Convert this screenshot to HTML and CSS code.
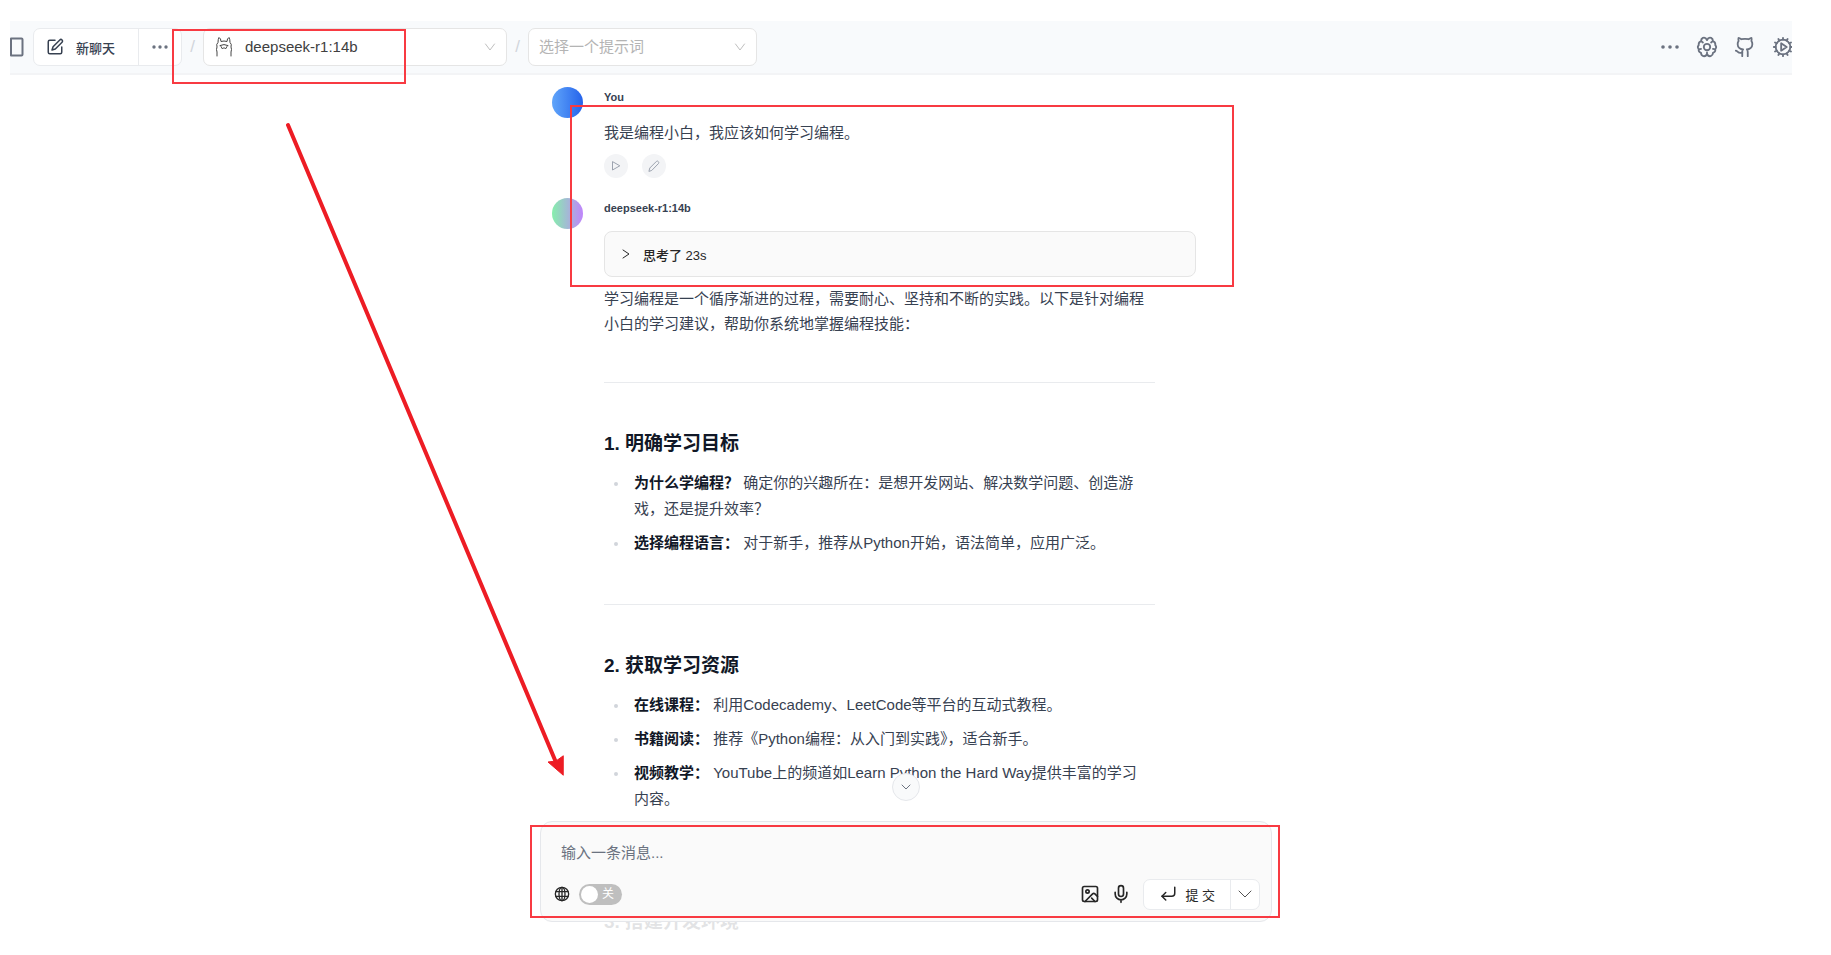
FILE: index.html
```html
<!DOCTYPE html>
<html lang="zh-CN">
<head>
    <meta charset="UTF-8">
    <meta name="viewport" content="width=device-width, initial-scale=1.0">
    <title>deepseek-r1:14b</title>
    <link rel="stylesheet" href="styles.css">
</head>
<body>
    <div class="app">
        <header class="header">
            <button type="button" class="icon-btn sidebar-btn" aria-label="侧边栏">
                <svg width="14" height="20" viewBox="0 0 14 20"><path d="M1 1.500h10.500q1 0 1 1v15q0 1-1 1H1z"/></svg>
            </button>
            <div class="btn-group">
                <button type="button" class="new-chat">
                    <svg width="18" height="18" viewBox="0 0 24 24"><path d="M12 3H5a2 2 0 0 0-2 2v14a2 2 0 0 0 2 2h14a2 2 0 0 0 2-2v-7"/><path d="M18.400 2.600a2.100 2.100 0 0 1 3 3L12.400 14.600 8 16l1.400-4.400z"/></svg>
                    <span>新聊天</span>
                </button>
                <button type="button" class="more-btn" aria-label="更多">
                    <svg class="dots" width="18" height="18" viewBox="0 0 18 18"><circle cx="3" cy="9" r="1.700"/><circle cx="9" cy="9" r="1.700"/><circle cx="15" cy="9" r="1.700"/></svg>
                </button>
            </div>
            <span class="slash">/</span>
            <div class="select-box model-select">
                <svg class="llama" width="18" height="22" viewBox="0 0 18 22"><path d="M2 20v-4q-1-2.500 0-5-1-3 1-4.500 0-3.500 1-5Q6 2.500 6 5.500q3-1 6 0 0-3 2-4 1 1.500 1 5 2 1.500 1 4.500 1 2.500 0 5v4"/><path d="M5 9.500q4-2 8 0M6 10.500l1.500 2.500L9 11.500l1.500 1.500 1.500-2.500"/></svg>
                <select aria-label="模型"><option>deepseek-r1:14b</option></select>
                <svg class="chevron" width="12" height="12" viewBox="0 0 12 12"><path d="M1.500 3 6 9l4.500-6"/></svg>
            </div>
            <span class="slash">/</span>
            <div class="select-box prompt-select">
                <select aria-label="提示词"><option>选择一个提示词</option></select>
                <svg class="chevron" width="12" height="12" viewBox="0 0 12 12"><path d="M1.500 3 6 9l4.500-6"/></svg>
            </div>
            <div class="header-right">
                <button type="button" class="icon-btn" aria-label="更多选项">
                    <svg class="dots" width="20" height="20" viewBox="0 0 20 20"><circle cx="3" cy="10" r="1.800"/><circle cx="10" cy="10" r="1.800"/><circle cx="17" cy="10" r="1.800"/></svg>
                </button>
                <button type="button" class="icon-btn" aria-label="模型设置">
                    <svg width="22" height="22" viewBox="0 0 24 24"><circle cx="12" cy="12" r="3.500"/><path d="M12 4.500Q10.500 1 7.500 2 5.500 3 5.500 5.500 2.500 6.500 3 10q-2 2 0 4.500-.5 3 2.500 4 0 2.500 2.500 3.500 3 .5 4-2.500 1 3 4 2.500 2.500-1 2.500-3.500 3-1 2.500-4 2-2.500 0-4.500.5-3.500-2.500-4.500 0-2.500-2-3.500-3-1-4.500 2.500zM5.500 5.500 7.500 7M18.500 5.500 16.500 7M3 14.500l2.500-.5M21 14.500l-2.500-.5M12 19.500V18"/></svg>
                </button>
                <a href="#" class="icon-btn" aria-label="GitHub">
                    <svg width="22" height="22" viewBox="0 0 24 24"><path d="M15 22v-4a4.800 4.800 0 0 0-1-3.500c3 0 6-2 6-5.500.08-1.250-.27-2.480-1-3.500.28-1.150.28-2.350 0-3.500 0 0-1 0-3 1.500-2.640-.5-5.360-.5-8 0C6 2 5 2 5 2c-.3 1.150-.3 2.350 0 3.500A5.400 5.400 0 0 0 4 9c0 3.500 3 5.500 6 5.500-.39.49-.68 1.050-.85 1.650S8.930 17.380 9 18v4"/><path d="M9 18c-4.510 2-5-2-7-2"/></svg>
                </a>
                <button type="button" class="icon-btn" aria-label="设置">
                    <svg width="22" height="22" viewBox="0 0 24 24"><circle cx="12" cy="12" r="8"/><path d="M12 2v2M12 20v2M2 12h2M17 20.700l-1-1.700M17 3.300 16 5M7 20.700 8 19M7 3.300 8 5M3.300 7 5 8M3.300 17 5 16M20.700 7 19 8M20.700 17 19 16M20 12h2M10 8v8l6-4z"/></svg>
                </button>
            </div>
        </header>

        <main class="chat">
            <div class="column">
                <section class="message">
                    <div class="avatar avatar-user"></div>
                    <div class="content">
                        <div class="name">You</div>
                        <p class="question">我是编程小白，我应该如何学习编程。</p>
                        <div class="actions">
                            <button type="button" aria-label="播放"><svg width="12" height="12" viewBox="0 0 12 12"><path d="M2.500 2v8l7-4z"/></svg></button>
                            <button type="button" aria-label="编辑"><svg width="12" height="12" viewBox="0 0 12 12"><path d="M1 11l.8-3L8.500 1.300q1-.7 1.800.3.900.9.200 1.900L4 10.200z"/></svg></button>
                        </div>
                    </div>
                </section>

                <section class="message">
                    <div class="avatar avatar-bot"></div>
                    <div class="content">
                        <div class="name">deepseek-r1:14b</div>
                        <button type="button" class="thinking">
                            <svg width="10" height="12" viewBox="0 0 10 12"><path d="M2 2l6 4-6 4"/></svg>
                            <span>思考了 23s</span>
                        </button>
                        <div class="prose">
                            <p>学习编程是一个循序渐进的过程，需要耐心、坚持和不断的实践。以下是针对编程小白的学习建议，帮助你系统地掌握编程技能：</p>
                            <hr>
                            <h3>1. 明确学习目标</h3>
                            <ul>
                                <li><strong>为什么学编程？</strong> 确定你的兴趣所在：是想开发网站、解决数学问题、创造游戏，还是提升效率？</li>
                                <li><strong>选择编程语言：</strong> 对于新手，推荐从Python开始，语法简单，应用广泛。</li>
                            </ul>
                            <hr>
                            <h3>2. 获取学习资源</h3>
                            <ul>
                                <li><strong>在线课程：</strong> 利用Codecademy、LeetCode等平台的互动式教程。</li>
                                <li><strong>书籍阅读：</strong> 推荐《Python编程：从入门到实践》，适合新手。</li>
                                <li><strong>视频教学：</strong> YouTube上的频道如Learn Python the Hard Way提供丰富的学习内容。</li>
                            </ul>
                            <hr>
                            <h3>3. 搭建开发环境</h3>
                        </div>
                    </div>
                </section>
            </div>

            <!-- Caja de mensaje fija sobre la conversación -->
            <div class="footer">
                <button type="button" class="scroll-btn" aria-label="滚动到底部">
                    <svg width="12" height="12" viewBox="0 0 12 12"><path d="M2 4l4 4 4-4"/></svg>
                </button>
                <form class="composer">
                    <textarea rows="1" placeholder="输入一条消息..." aria-label="消息"></textarea>
                    <div class="toolbar">
                        <svg class="tool-icon globe" width="16" height="16" viewBox="0 0 24 24"><circle cx="12" cy="12" r="10"/><ellipse cx="12" cy="12" rx="4.500" ry="10"/><path d="M3 8.500h18M3 15.500h18M12 2v20"/></svg>
                        <label class="switch">
                            <input type="checkbox" aria-label="联网搜索">
                            <span class="knob"></span>
                            <span class="switch-text">关</span>
                        </label>
                        <div class="toolbar-right">
                            <button type="button" class="icon-btn tool-icon" aria-label="图片">
                                <svg width="20" height="20" viewBox="0 0 24 24"><rect x="3" y="3" width="18" height="18" rx="2"/><circle cx="9" cy="9" r="2"/><path d="M21 15l-3.100-3.100a2 2 0 0 0-2.800 0L6 21"/><path d="M14 17l4 4"/></svg>
                            </button>
                            <button type="button" class="icon-btn tool-icon" aria-label="语音">
                                <svg width="20" height="20" viewBox="0 0 24 24"><rect x="9" y="2" width="6" height="13" rx="3"/><path d="M19 10v2a7 7 0 0 1-14 0v-2M12 19v3"/></svg>
                            </button>
                            <div class="btn-group submit-group">
                                <button type="submit" class="submit">
                                    <svg width="18" height="18" viewBox="0 0 24 24"><path d="M9 10l-5 5 5 5"/><path d="M21 3v8a4 4 0 0 1-4 4H4"/></svg>
                                    <span>提 交</span>
                                </button>
                                <button type="button" class="submit-more" aria-label="发送选项">
                                    <svg width="16" height="16" viewBox="0 0 16 16"><path d="M2 5l6 6 6-6"/></svg>
                                </button>
                            </div>
                        </div>
                    </div>
                </form>
            </div>
        </main>
    </div>

    <!-- Marcas rojas -->
    <div class="mark mark-model"></div>
    <div class="mark mark-answer"></div>
    <div class="mark mark-input"></div>
    <svg class="arrow" width="280" height="656" viewBox="0 0 280 656">
        <path class="arrow-line" d="M3 3 270 638"/>
        <path class="arrow-head" d="M278 653 263 640 271 639 278 634z"/>
    </svg>
</body>
</html>
```
FILE: styles.css
```css
* {
    box-sizing: border-box;
}
body {
    font-family: "Liberation Sans", "Noto Sans CJK SC", sans-serif;
    margin: 0;
    font-size: 15px;
    color: #374151;
    background-color: #fff;
    overflow: hidden;
}
svg {
    display: block;
    flex: none;
    fill: none;
    stroke: currentColor;
    stroke-width: 2;
    stroke-linecap: round;
    stroke-linejoin: round;
}
button, select, textarea {
    font-family: inherit;
    color: inherit;
    border: none;
    background: none;
    padding: 0;
    margin: 0;
    outline: none;
}
button {
    cursor: pointer;
}
p, h3, ul {
    margin: 0;
    padding: 0;
}
.app {
    display: flex;
    flex-direction: column;
    height: 100vh;
    padding: 21px 39px 0 10px;
}

/* Barra superior */
.header {
    display: flex;
    align-items: center;
    flex: none;
    height: 54px;
    background-color: #f8fafc;
    border-bottom: 2px solid #f3f4f6;
    overflow: hidden;
}
.icon-btn {
    display: flex;
    color: #6b7280;
}
.sidebar-btn {
    margin-right: 9px;
}
.btn-group {
    display: flex;
    height: 38px;
    background-color: #fff;
    border: 1px solid #e9ebee;
    border-radius: 7px;
}
.new-chat {
    display: flex;
    align-items: center;
    gap: 12px;
    padding: 0 23px 0 12px;
    font-size: 13px;
    font-weight: 500;
    color: #374151;
    border-right: 1px solid #e9ebee;
}
.more-btn {
    padding: 0 12px;
    color: #6b7280;
}
.dots {
    fill: currentColor;
    stroke: none;
}
.slash {
    width: 21px;
    text-align: center;
    font-size: 17px;
    color: #d1d5db;
}
.select-box {
    display: flex;
    align-items: center;
    height: 38px;
    padding: 0 10px;
    background-color: #fff;
    border: 1px solid #e5e5e5;
    border-radius: 7px;
}
.select-box select {
    flex: 1;
    min-width: 0;
    appearance: none;
    font-size: 15px;
    line-height: 24px;
    color: #404040;
}
.model-select {
    width: 304px;
}
.prompt-select {
    width: 229px;
}
.select-box.prompt-select select {
    color: #b4b4b4;
}
.llama {
    margin: 0 12px 0 1px;
    color: #444;
    stroke-width: 1;
}
.chevron {
    color: #bfbfbf;
    stroke-width: 1;
}
.header-right {
    display: flex;
    align-items: center;
    gap: 16px;
    margin-left: auto;
    margin-right: -2px;
}

/* Conversación */
.chat {
    position: relative;
    flex: 1;
    min-height: 0;
    padding: 12px 0 0 10px;
    overflow: hidden;
}
.column {
    max-width: 732px;
    margin: 0 auto;
    padding: 0 76px 0 12px;
}
.message {
    display: flex;
    gap: 21px;
    margin-bottom: 20px;
}
.avatar {
    flex: none;
    width: 31px;
    height: 31px;
    border-radius: 50%;
}
.avatar-user {
    background: linear-gradient(to right, #60a5fa, #2563eb);
}
.avatar-bot {
    background: linear-gradient(to right, #86efac, #c084fc);
}
.content {
    flex: 1;
    min-width: 0;
}
.name {
    margin-bottom: 13px;
    font-size: 11px;
    font-weight: bold;
    line-height: 20px;
}
.question {
    line-height: 26px;
}
.actions {
    display: flex;
    gap: 14px;
    margin-top: 8px;
}
.actions button {
    display: flex;
    align-items: center;
    justify-content: center;
    width: 24px;
    height: 24px;
    border-radius: 50%;
    background-color: #f3f4f6;
    color: #9ca3af;
}
.actions svg {
    stroke-width: 1;
}
.thinking {
    display: flex;
    align-items: center;
    gap: 12px;
    width: 100%;
    height: 46px;
    padding: 0 16px;
    font-size: 13px;
    font-weight: 500;
    color: #262626;
    background-color: #fafafa;
    border: 1px solid #e5e5e5;
    border-radius: 8px;
}
.thinking svg {
    stroke-width: 1;
}
.prose {
    max-width: 551px;
    margin-top: 9px;
}
.prose p {
    line-height: 25px;
}
.prose hr {
    height: 1px;
    margin: 48px 0;
    border: none;
    background-color: #e9ebee;
}
.prose p + hr {
    margin-top: 46px;
}
.prose h3 {
    margin-bottom: 13px;
    font-size: 19px;
    line-height: 26px;
    font-weight: 600;
    color: #111827;
}
.prose ul {
    padding: 0 10px 0 30px;
    list-style: none;
}
.prose li {
    position: relative;
    margin-bottom: 8px;
    line-height: 26px;
}
.prose li:last-child {
    margin-bottom: 0;
}
.prose li::before {
    content: "";
    position: absolute;
    left: -20px;
    top: 12px;
    width: 4px;
    height: 4px;
    border-radius: 50%;
    background-color: #d1d5db;
}
.prose strong {
    color: #111827;
}

/* Caja de mensaje */
.footer {
    position: absolute;
    left: 10px;
    right: 0;
    bottom: 0;
    padding-bottom: 33px;
    background: linear-gradient(to bottom, rgba(255, 255, 255, 0) 48px, rgba(255, 255, 255, 0.88) 48px);
}
.scroll-btn {
    display: flex;
    align-items: center;
    justify-content: center;
    width: 28px;
    height: 28px;
    margin: 0 auto 20px;
    border-radius: 50%;
    background-color: #f9fafb;
    border: 1px solid #e5e7eb;
    color: #6b7280;
}
.scroll-btn svg {
    stroke-width: 1;
}
.composer {
    max-width: 732px;
    height: 101px;
    margin: 0 auto;
    padding: 19px 11px 11px 13px;
    background-color: #fafafa;
    border: 1px solid #e5e7eb;
    border-radius: 12px;
}
.composer textarea {
    display: block;
    width: 100%;
    height: 24px;
    margin-bottom: 13px;
    padding: 0 7px;
    font-size: 15px;
    line-height: 24px;
    resize: none;
    overflow: hidden;
}
.composer textarea::placeholder {
    color: #6b7280;
}
.toolbar {
    display: flex;
    align-items: center;
    gap: 9px;
    height: 32px;
}
.tool-icon {
    color: #262626;
}
.switch {
    display: flex;
    align-items: center;
    position: relative;
    width: 43px;
    height: 21px;
    padding: 0 2px;
    border-radius: 11px;
    background-color: #bfbfbf;
    color: #fff;
    font-size: 12px;
    line-height: 20px;
}
.switch input {
    position: absolute;
    inset: 0;
    width: 100%;
    height: 100%;
    margin: 0;
    opacity: 0;
}
.knob {
    width: 17px;
    height: 17px;
    border-radius: 50%;
    background-color: #fff;
}
.switch-text {
    margin-left: 4px;
}
.toolbar-right {
    display: flex;
    align-items: center;
    gap: 11px;
    margin-left: auto;
}
.submit-group {
    height: 31px;
    margin-left: 1px;
}
.submit {
    display: flex;
    align-items: center;
    gap: 8px;
    padding: 0 15px;
    font-size: 13px;
    color: #262626;
    border-right: 1px solid #e9ebee;
}
.submit-more {
    padding: 0 6px;
    color: #525252;
}
.submit-more svg {
    stroke-width: 1;
}

/* Marcas rojas */
.mark {
    position: absolute;
    border: 2px solid #f83a42;
    pointer-events: none;
}
.mark-model {
    left: 172px;
    top: 29px;
    width: 234px;
    height: 55px;
}
.mark-answer {
    left: 570px;
    top: 105px;
    width: 664px;
    height: 182px;
}
.mark-input {
    left: 530px;
    top: 825px;
    width: 750px;
    height: 93px;
}
.arrow {
    position: absolute;
    left: 285px;
    top: 122px;
    color: #ed1c24;
    pointer-events: none;
}
.arrow-line {
    stroke-width: 4;
}
.arrow-head {
    fill: currentColor;
    stroke-width: 1;
}
```
